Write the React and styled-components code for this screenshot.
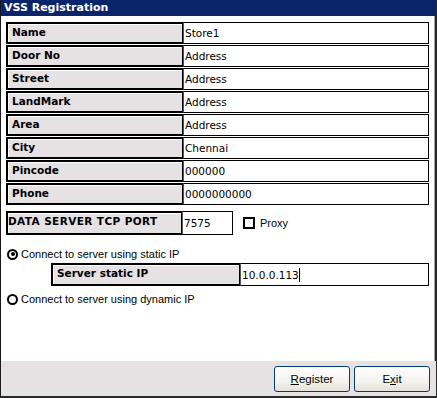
import React from 'react';
import styled, { createGlobalStyle } from 'styled-components';

const GlobalStyle = createGlobalStyle`
  html, body { margin: 0; padding: 0; background: #fff; }
  * { box-sizing: border-box; }
`;

const fields = [
  ['Name', 'Store1'],
  ['Door No', 'Address'],
  ['Street', 'Address'],
  ['LandMark', 'Address'],
  ['Area', 'Address'],
  ['City', 'Chennai'],
  ['Pincode', '000000'],
  ['Phone', '0000000000'],
];

function App() {
  return (
    <>
      <GlobalStyle />
      <Window>
        <TitleBar>VSS Registration</TitleBar>
        <Body>
          <FieldList>
            {fields.map(([label, value]) => (
              <FieldRow key={label}>
                <Label>{label}</Label>
                <Value>{value}</Value>
              </FieldRow>
            ))}
          </FieldList>

          <PortRow>
            <Label $width={176} $wide>DATA SERVER TCP PORT</Label>
            <Value $width={51}>7575</Value>
            <CheckWrap>
              <CheckBox />
              <Plain>Proxy</Plain>
            </CheckWrap>
          </PortRow>

          <RadioRow>
            <Radio $checked />
            <Plain>Connect to server using static IP</Plain>
          </RadioRow>
          <IpRow>
            <Label $width={189}>Server static IP</Label>
            <Value>
              10.0.0.113<Caret />
            </Value>
          </IpRow>
          <RadioRow $tight>
            <Radio />
            <Plain>Connect to server using dynamic IP</Plain>
          </RadioRow>
        </Body>
        <Footer>
          <Button>
            <u>R</u>egister
          </Button>
          <Button>
            E<u>x</u>it
          </Button>
        </Footer>
      </Window>
    </>
  );
}

const Window = styled.div`
  width: 437px;
  height: 398px;
  display: flex;
  flex-direction: column;
  border-left: 1px solid #1a1a1a;
  border-right: 2px solid #2a2a2a;
  border-bottom: 2px solid #2a2a2a;
  box-shadow: inset -1px 0 0 #a0a0a0;
  background: #fff;
`;

const TitleBar = styled.div`
  height: 16px;
  background: #0a246a;
  color: #fff;
  font-family: Tahoma, "DejaVu Sans", sans-serif;
  font-weight: bold;
  font-size: 11px;
  line-height: 16px;
  padding-left: 3px;
  margin-right: -1px;
`;

const Body = styled.div`
  flex: 1;
  padding: 6px 6px 0 5px;
`;

const FieldList = styled.div`
  display: flex;
  flex-direction: column;
  gap: 1px;
`;

const FieldRow = styled.div`
  display: flex;
  height: 22px;
`;

const Label = styled.div`
  width: ${(p) => (p.$width ? `${p.$width}px` : '177px')};
  flex-shrink: 0;
  background: #e6e2e4;
  border: 2px solid #000;
  border-right-width: 1px;
  box-shadow: inset 1px 1px 0 #fff;
  font-family: "DejaVu Sans", Verdana, sans-serif;
  font-weight: bold;
  font-size: 10.5px;
  line-height: 16px;
  padding-left: ${(p) => (p.$wide ? '0' : '4px')};
  letter-spacing: ${(p) => (p.$wide ? '0.4px' : '0')};
  color: #000;
  white-space: nowrap;
`;

const Value = styled.div`
  ${(p) => (p.$width ? `width: ${p.$width}px; flex-shrink: 0;` : 'flex: 1;')}
  border: 1px solid #000;
  border-left: 1px solid #555;
  background: #fff;
  font-family: "DejaVu Sans", Verdana, sans-serif;
  font-size: 10.5px;
  line-height: 20px;
  padding-left: 1px;
  color: #000;
  display: flex;
  align-items: center;
`;

const Caret = styled.span`
  display: inline-block;
  width: 1px;
  height: 14px;
  background: #000;
`;

const PortRow = styled.div`
  display: flex;
  align-items: center;
  height: 24px;
  margin-top: 6px;
  & > ${Label}, & > ${Value} {
    height: 24px;
  }
`;

const CheckWrap = styled.div`
  display: flex;
  align-items: center;
  margin-left: 10px;
  gap: 5px;
`;

const CheckBox = styled.span`
  width: 12px;
  height: 12px;
  border: 2px solid #000;
  background: #fff;
`;

const Plain = styled.span`
  font-family: "Liberation Sans", Arial, sans-serif;
  font-size: 11px;
  color: #000;
`;

const RadioRow = styled.div`
  display: flex;
  align-items: center;
  gap: 3px;
  height: 14px;
  margin-top: ${(p) => (p.$tight ? '6px' : '12px')};
  padding-left: 1px;
`;

const Radio = styled.span`
  width: 11px;
  height: 11px;
  border-radius: 50%;
  border: 2px solid #000;
  background: #fff;
  position: relative;
  &::after {
    content: '';
    display: ${(p) => (p.$checked ? 'block' : 'none')};
    position: absolute;
    left: 1.5px;
    top: 1.5px;
    width: 4px;
    height: 4px;
    border-radius: 50%;
    background: #000;
  }
`;

const IpRow = styled.div`
  display: flex;
  height: 23px;
  margin: 2px 0 0 45px;
`;

const Footer = styled.div`
  height: 35px;
  background: #e6e2e4;
  display: flex;
  justify-content: flex-end;
  align-items: center;
  gap: 4px;
  padding: 0 6px 0 0;
  margin-right: -1px;
`;

const Button = styled.button`
  width: 76px;
  height: 26px;
  margin-top: 1px;
  border: 1px solid #003c74;
  border-radius: 3px;
  background: linear-gradient(#ffffff, #f4f3ee 60%, #e3e1d8);
  font-family: "Liberation Sans", Arial, sans-serif;
  font-size: 11.5px;
  color: #000;
  padding: 0;
`;

export default App;
